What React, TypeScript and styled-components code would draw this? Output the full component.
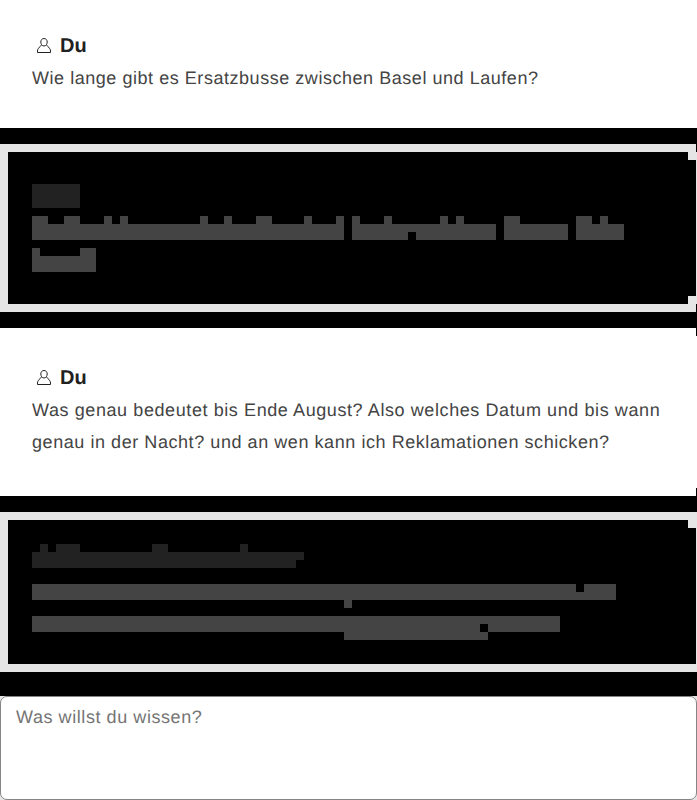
import React from "react";
import styled, { createGlobalStyle } from "styled-components";

const GlobalStyle = createGlobalStyle`
  * { box-sizing: border-box; }
  html, body { margin: 0; background: #fff; }
  body {
    overflow: hidden;
    font-family: "Liberation Sans", Arial, sans-serif;
    text-rendering: geometricPrecision;
    -webkit-font-smoothing: antialiased;
  }
`;

const Chat = styled.main`
  display: flex;
  flex-direction: column;
  width: 697px;
  height: 800px;
`;

const Question = styled.section<{ $height: number; $top: number }>`
  height: ${(p) => p.$height}px;
  padding: ${(p) => p.$top}px 30px 0 32px;
  background: #fff;
`;

const Author = styled.h2`
  display: flex;
  align-items: center;
  gap: 4px;
  height: 32px;
  margin: 0;
  color: #212121;
  font-size: 20px;
  line-height: 30px;
  font-weight: 700;
`;

const AuthorName = styled.span`
  padding-top: 2px;
`;

const UserIcon = styled.svg`
  flex: none;
  width: 24px;
  height: 24px;
`;

const Message = styled.p<{ $tracking?: number }>`
  margin: 1px 0 0;
  color: #444;
  font-size: 18px;
  line-height: 32px;
  letter-spacing: ${(p) => p.$tracking ?? 0.54}px;
  & + & { margin-top: 0; }
  white-space: nowrap;
`;

const Answer = styled.section`
  padding: 16px 0;
  height: 200px;
  background: #000;
`;

const Frame = styled.div<{ $height: number; $top: number }>`
  position: relative;
  display: flex;
  flex-direction: column;
  gap: 8px;
  height: ${(p) => p.$height}px;
  padding: ${(p) => p.$top}px 24px 0;
  border: 8px solid #e5e5e5;
  border-right-width: 1px;
`;

const Notch = styled.i<{ $top: number; $right: number; $w: number; $dark?: boolean }>`
  position: absolute;
  top: ${(p) => p.$top}px;
  right: ${(p) => p.$right}px;
  width: ${(p) => p.$w}px;
  height: 8px;
  background: ${(p) => (p.$dark ? "#000" : "#e5e5e5")};
`;

const MosaicLine = styled.svg<{ $tone: string }>`
  display: block;
  flex: none;
  width: 600px;
  height: 24px;
  fill: ${(p) => p.$tone};
`;

const Prompt = styled.textarea`
  display: block;
  width: 697px;
  height: 104px;
  margin: 0;
  padding: 8px 15px;
  border: 1px solid #858585;
  border-radius: 7px;
  outline: 0;
  resize: none;
  overflow: hidden;
  background: #fff;
  color: #444;
  font: 18px/24px "Liberation Sans", Arial, sans-serif;
  letter-spacing: 0.57px;
  text-rendering: geometricPrecision;
  &::placeholder { color: #757575; opacity: 1; }
`;

const PromptArea = styled.footer`
  background: #e5e5e5;
`;

// Each run is x, y, width, height in 8px cells.
type Run = [number, number, number, number];

const tops = (...pairs: [number, number][]): Run[] => pairs.map(([x, w]) => [x, 0, w, 1]);

const titleA: Run[] = [[0, 0, 6, 3]];
const lineA1: Run[] = [
  ...tops([0, 2], [4, 2], [9, 1], [11, 1], [21, 1], [24, 1], [28, 2], [34, 1], [38, 1], [40, 1], [44, 1], [51, 1], [53, 1], [59, 2], [68, 2], [71, 1]),
  [0, 1, 39, 2], [40, 1, 18, 1], [40, 2, 7, 1], [48, 2, 10, 1], [59, 1, 8, 2], [68, 1, 6, 2],
];
const lineA2: Run[] = [...tops([0, 1], [6, 2]), [0, 1, 8, 2]];
const titleB: Run[] = [...tops([1, 1], [3, 3], [15, 2], [26, 1]), [0, 1, 34, 1], [0, 2, 33, 1]];
const lineB1: Run[] = [[0, 0, 68, 1], [69, 0, 4, 1], [0, 1, 73, 1], [39, 2, 1, 1]];
const lineB2: Run[] = [[0, 0, 66, 1], [0, 1, 56, 1], [57, 1, 9, 1], [39, 2, 18, 1]];

function Mosaic({ runs, tone = "#444" }: { runs: Run[]; tone?: string }) {
  return (
    <MosaicLine $tone={tone} viewBox="0 0 75 3" shapeRendering="crispEdges" aria-hidden>
      <path d={runs.map(([x, y, w, h]) => `M${x} ${y}h${w}v${h}h${-w}z`).join("")} />
    </MosaicLine>
  );
}

const TitleGap = styled.div`
  margin-bottom: 8px;
`;

function Du() {
  return (
    <Author>
      <UserIcon viewBox="0 0 24 24" fill="none" stroke="#222" strokeWidth="1">
        <path d="M12 5.500c2 0 3.200 1.500 3.200 3.500s-1.200 4-3.200 4-3.200-2-3.200-4 1.200-3.500 3.200-3.500Z" />
        <path d="M9.500 12C8.600 12.900 7.300 14.300 6.300 15.600c-.6.800-.8 1.600-.8 2.400v1.500h13V18c0-.8-.2-1.600-.8-2.400-1-1.300-2.300-2.700-3.200-3.600" />
      </UserIcon>
      <AuthorName>Du</AuthorName>
    </Author>
  );
}

export default function App() {
  return (
    <>
      <GlobalStyle />
      <Chat>
        <Question $height={128} $top={29}>
          <Du />
          <Message>Wie lange gibt es Ersatzbusse zwischen Basel und Laufen?</Message>
        </Question>
        <Answer>
          <Frame $height={168} $top={32}>
            <Mosaic runs={titleA} tone="#222" />
            <Mosaic runs={lineA1} />
            <Mosaic runs={lineA2} />
            <Notch $top={-8} $right={-1} $w={1} $dark />
            <Notch $top={0} $right={0} $w={8} />
            <Notch $top={144} $right={0} $w={8} />
            <Notch $top={152} $right={-1} $w={1} $dark />
            <Notch $top={176} $right={-1} $w={1} $dark />
          </Frame>
        </Answer>
        <Question $height={168} $top={33}>
          <Du />
          <Message $tracking={0.59}>Was genau bedeutet bis Ende August? Also welches Datum und bis wann</Message>
          <Message $tracking={0.56}>genau in der Nacht? und an wen kann ich Reklamationen schicken?</Message>
        </Question>
        <Answer>
          <Frame $height={160} $top={24}>
            <TitleGap>
              <Mosaic runs={titleB} tone="#222" />
            </TitleGap>
            <Mosaic runs={lineB1} />
            <Mosaic runs={lineB2} />
            <Notch $top={-32} $right={-1} $w={1} $dark />
            <Notch $top={0} $right={0} $w={8} />
          </Frame>
        </Answer>
        <PromptArea>
          <Prompt placeholder="Was willst du wissen?" />
        </PromptArea>
      </Chat>
    </>
  );
}
